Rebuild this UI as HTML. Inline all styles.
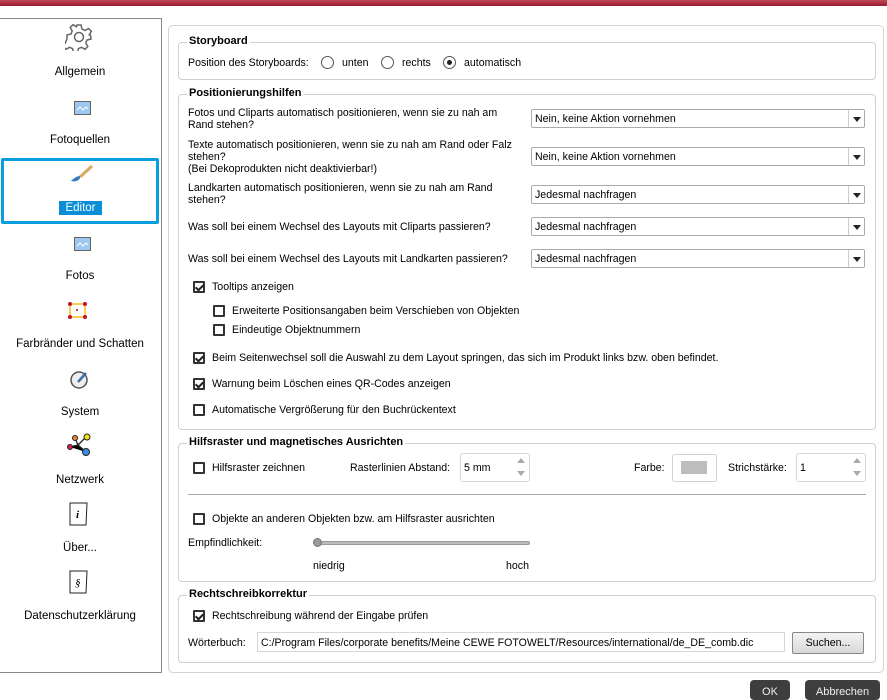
<!DOCTYPE html>
<html><head><meta charset="utf-8">
<style>
*{box-sizing:border-box;margin:0;padding:0}
body{width:887px;height:694px;overflow:hidden;background:#fff;font-family:"Liberation Sans",sans-serif;font-size:10.6px;color:#000;position:relative}
.a{position:absolute;white-space:nowrap}
.top{position:absolute;left:0;top:0;width:887px;height:6px;background:linear-gradient(#c0475a,#9c1b2f)}
.left{position:absolute;left:0;top:18px;width:162px;height:655px;border:1px solid #8a8a8a;border-left:none;background:#fff}
.lab{position:absolute;left:0;width:160px;text-align:center;font-size:11.5px}
.outer{position:absolute;left:168px;top:25px;width:716px;height:648px;border:1px solid #d4d4d4;border-radius:5px}
.grp{position:absolute;left:178px;width:698px;border:1px solid #d0d0d0;border-radius:4px}
.gt{position:absolute;background:#fff;font-weight:bold;padding:0 2px;left:8px;top:-8px;font-size:11px}
.cb{position:absolute;width:12px;height:12px;border:2px solid #333;border-radius:1px;background:#fff}
.cb.c::after{content:"";position:absolute;left:2px;top:0px;width:3px;height:6px;border:solid #222;border-width:0 2px 2px 0;transform:rotate(45deg)}
.rb{position:absolute;width:13px;height:13px;border:1px solid #555;border-radius:50%;background:#fff}
.rb.c::after{content:"";position:absolute;left:3px;top:3px;width:5px;height:5px;border-radius:50%;background:#222}
.dd{position:absolute;left:531px;width:334px;height:19px;border:1px solid #ababab;border-radius:2px;background:#fff;padding:3px 0 0 3px}
.dd::after{content:"";position:absolute;right:0;top:0;width:15px;height:17px;border-left:1px solid #ccc}
.dd::before{content:"";position:absolute;right:3px;top:7px;border:4px solid transparent;border-top:5px solid #222;border-bottom:none;z-index:1}
.sp{position:absolute;height:29px;border:1px solid #d6d6d6;border-radius:3px;background:#fff;padding:8px 0 0 3px}
.up{position:absolute;right:4px;top:4px;border:4px solid transparent;border-bottom:5px solid #aaa;border-top:none}
.dn{position:absolute;right:4px;bottom:5px;border:4px solid transparent;border-top:5px solid #aaa;border-bottom:none}
.btn{position:absolute;top:680px;height:20px;background:#3e3e3e;border-radius:4px;color:#eee;text-align:center;padding-top:6px;font-size:11px}
</style></head><body>
<div class="top"></div>
<div class="left">
 <svg class="a" style="left:65px;top:4px" width="28" height="28" viewBox="0 0 28 28"><path d="M12 2h4l1 4 3 1.5 3.5-2 2.8 2.8-2 3.5L25.5 12l.5 4-4 1-1.2 3 2 3.5-2.8 2.8-3.5-2-3 1.2-1 4h-4l-1-4-3-1.2-3.5 2-2.8-2.8 2-3.5L2 16v-4l4-1 1.2-3-2-3.5L8 1.7l3.5 2L12 2z" fill="#fff" stroke="#666" stroke-width="1.5"/><circle cx="14" cy="14" r="4.5" fill="#fff" stroke="#666" stroke-width="1.5"/></svg>
 <div class="lab" style="top:47px">Allgemein</div>
 <svg class="a" style="left:74px;top:82px" width="17" height="15"><rect x=".5" y=".5" width="16" height="13" fill="#9cc8f0" stroke="#666"/><path d="M3 9l3-3 3 3 3-3 2 2" stroke="#fff" fill="none"/></svg>
 <div class="lab" style="top:115px">Fotoquellen</div>
 <div class="a" style="left:1px;top:139px;width:158px;height:66px;border:3px solid #0a9ede;border-radius:2px"></div>
 <svg class="a" style="left:68px;top:145px" width="26" height="20"><path d="M24 2L12 13" stroke="#d8a860" stroke-width="3"/><path d="M12 12c-3 0-6 2-9 5 4 1 8 0 9-3z" fill="#3a7bc0"/></svg>
 <div class="a" style="left:59px;top:182px;width:43px;height:14px;background:#0a8fd6;color:#fff;text-align:center;font-size:11.5px;line-height:14px">Editor</div>
 <svg class="a" style="left:74px;top:218px" width="17" height="15"><rect x=".5" y=".5" width="16" height="13" fill="#9cc8f0" stroke="#666"/><path d="M3 9l3-3 3 3 3-3 2 2" stroke="#fff" fill="none"/></svg>
 <div class="lab" style="top:251px">Fotos</div>
 <svg class="a" style="left:67px;top:282px" width="24" height="20"><rect x="3" y="3" width="15" height="13" fill="#fff" stroke="#f0c020" stroke-width="1.5"/><g fill="#c8102e"><circle cx="3" cy="3" r="2"/><circle cx="18" cy="3" r="2"/><circle cx="3" cy="16" r="2"/><circle cx="18" cy="16" r="2"/><circle cx="10" cy="9" r="1"/></g></svg>
 <div class="lab" style="top:319px">Farbränder und Schatten</div>
 <svg class="a" style="left:69px;top:350px" width="22" height="22"><circle cx="10" cy="11" r="8" fill="#eee" stroke="#555" stroke-width="1.5"/><path d="M9 13l8-9" stroke="#3a6ea8" stroke-width="2.5"/></svg>
 <div class="lab" style="top:387px">System</div>
 <svg class="a" style="left:65px;top:414px" width="30" height="26"><path d="M5 14l8-2 8 7M13 12l-3-7M13 12l8-8" stroke="#222" stroke-width="1.3"/><circle cx="5" cy="14" r="2.5" fill="#d8204a" stroke="#222"/><circle cx="10" cy="5" r="2.5" fill="#f08020" stroke="#222"/><circle cx="22" cy="4" r="3" fill="#f8e020" stroke="#222"/><circle cx="21" cy="19" r="3.5" fill="#3a8ee8" stroke="#222"/></svg>
 <div class="lab" style="top:455px">Netzwerk</div>
 <svg class="a" style="left:68px;top:482px" width="22" height="26"><path d="M2 2h17l-1 22H2z" fill="#fff" stroke="#222"/><text x="8" y="17" font-family="Liberation Serif" font-style="italic" font-weight="bold" font-size="11">i</text></svg>
 <div class="lab" style="top:523px">Über...</div>
 <svg class="a" style="left:68px;top:550px" width="22" height="26"><path d="M2 2h17l-1 22H2z" fill="#fff" stroke="#222"/><text x="7" y="17" font-family="Liberation Serif" font-style="italic" font-size="11">§</text></svg>
 <div class="lab" style="top:591px">Datenschutzerklärung</div>
</div>
<div class="outer"></div>

<div class="grp" style="top:42px;height:38px"><div class="gt">Storyboard</div></div>
<div class="a" style="left:188px;top:57px">Position des Storyboards:</div>
<div class="rb" style="left:321px;top:56px"></div><div class="a" style="left:342px;top:57px">unten</div>
<div class="rb" style="left:381px;top:56px"></div><div class="a" style="left:402px;top:57px">rechts</div>
<div class="rb c" style="left:443px;top:56px"></div><div class="a" style="left:464px;top:57px">automatisch</div>

<div class="grp" style="top:94px;height:336px"><div class="gt">Positionierungshilfen</div></div>
<div class="a" style="left:188px;top:107px;line-height:12px">Fotos und Cliparts automatisch positionieren, wenn sie zu nah am<br>Rand stehen?</div>
<div class="dd" style="top:109px">Nein, keine Aktion vornehmen</div>
<div class="a" style="left:188px;top:139px;line-height:12px">Texte automatisch positionieren, wenn sie zu nah am Rand oder Falz<br>stehen?<br>(Bei Dekoprodukten nicht deaktivierbar!)</div>
<div class="dd" style="top:147px">Nein, keine Aktion vornehmen</div>
<div class="a" style="left:188px;top:182px;line-height:12px">Landkarten automatisch positionieren, wenn sie zu nah am Rand<br>stehen?</div>
<div class="dd" style="top:185px">Jedesmal nachfragen</div>
<div class="a" style="left:188px;top:221px">Was soll bei einem Wechsel des Layouts mit Cliparts passieren?</div>
<div class="dd" style="top:217px">Jedesmal nachfragen</div>
<div class="a" style="left:188px;top:253px">Was soll bei einem Wechsel des Layouts mit Landkarten passieren?</div>
<div class="dd" style="top:249px">Jedesmal nachfragen</div>
<div class="cb c" style="left:193px;top:281px"></div><div class="a" style="left:212px;top:281px">Tooltips anzeigen</div>
<div class="cb" style="left:213px;top:305px"></div><div class="a" style="left:232px;top:305px">Erweiterte Positionsangaben beim Verschieben von Objekten</div>
<div class="cb" style="left:213px;top:324px"></div><div class="a" style="left:232px;top:324px">Eindeutige Objektnummern</div>
<div class="cb c" style="left:193px;top:352px"></div><div class="a" style="left:212px;top:352px">Beim Seitenwechsel soll die Auswahl zu dem Layout springen, das sich im Produkt links bzw. oben befindet.</div>
<div class="cb c" style="left:193px;top:378px"></div><div class="a" style="left:212px;top:378px">Warnung beim Löschen eines QR-Codes anzeigen</div>
<div class="cb" style="left:193px;top:404px"></div><div class="a" style="left:212px;top:404px">Automatische Vergrößerung für den Buchrückentext</div>

<div class="grp" style="top:443px;height:139px"><div class="gt">Hilfsraster und magnetisches Ausrichten</div></div>
<div class="cb" style="left:193px;top:462px"></div><div class="a" style="left:212px;top:462px">Hilfsraster zeichnen</div>
<div class="a" style="left:350px;top:462px">Rasterlinien Abstand:</div>
<div class="sp" style="left:460px;top:453px;width:70px">5 mm<div class="up"></div><div class="dn"></div></div>
<div class="a" style="left:634px;top:462px">Farbe:</div>
<div class="a" style="left:672px;top:454px;width:45px;height:28px;border:1px solid #d0d0d0;border-radius:3px"><div style="position:absolute;left:8px;top:6px;width:26px;height:13px;background:#bdbdbd"></div></div>
<div class="a" style="left:728px;top:462px">Strichstärke:</div>
<div class="sp" style="left:796px;top:453px;width:70px">1<div class="up"></div><div class="dn"></div></div>
<div class="a" style="left:188px;top:494px;width:678px;height:1px;background:#a8a8a8"></div>
<div class="cb" style="left:193px;top:513px"></div><div class="a" style="left:212px;top:513px">Objekte an anderen Objekten bzw. am Hilfsraster ausrichten</div>
<div class="a" style="left:188px;top:537px">Empfindlichkeit:</div>
<div class="a" style="left:316px;top:541px;width:214px;height:4px;background:#bbb;border:1px solid #999;border-radius:2px"></div>
<div class="a" style="left:313px;top:538px;width:9px;height:9px;border-radius:50%;background:#999;border:1px solid #777"></div>
<div class="a" style="left:313px;top:560px">niedrig</div>
<div class="a" style="left:506px;top:560px">hoch</div>

<div class="grp" style="top:595px;height:68px"><div class="gt">Rechtschreibkorrektur</div></div>
<div class="cb c" style="left:193px;top:610px"></div><div class="a" style="left:212px;top:610px">Rechtschreibung während der Eingabe prüfen</div>
<div class="a" style="left:188px;top:637px">Wörterbuch:</div>
<div class="a" style="left:257px;top:632px;width:528px;height:20px;border:1px solid #d6d6d6;padding:4px 0 0 3px">C:/Program Files/corporate benefits/Meine CEWE FOTOWELT/Resources/international/de_DE_comb.dic</div>
<div class="a" style="left:792px;top:632px;width:72px;height:22px;border:1px solid #888;border-radius:2px;background:linear-gradient(#f4f4f4,#d8d8d8);text-align:center;padding-top:4px">Suchen...</div>

<div class="btn" style="left:750px;width:40px">OK</div>
<div class="btn" style="left:805px;width:75px">Abbrechen</div>
</body></html>
